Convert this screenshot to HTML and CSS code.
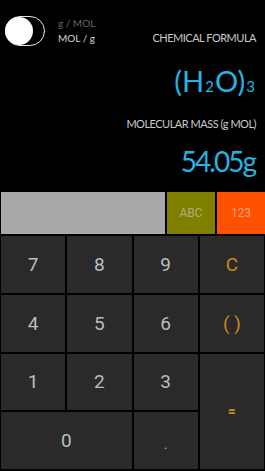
FILE: index.html
```html
<!DOCTYPE html>
<html>
<head>
<meta charset="utf-8">
<title>Molecular Mass</title>
<link rel="stylesheet" href="styles.css">
</head>
<body>
<div class="app">
	<div class="top">
		<div class="bar">
			<div class="switch"><span class="knob"></span></div>
			<div class="units">
				<div class="unit_off">g / MOL</div>
				<div class="unit_on">MOL / g</div>
			</div>
			<div class="label chem">CHEMICAL FORMULA</div>
		</div>
		<div class="formula">(H<sub>2</sub>O)<sub>3</sub></div>
		<div class="label mass">MOLECULAR MASS (g MOL)</div>
		<div class="result">54.05g</div>
	</div>

	<div class="display">
		<div class="input"></div>
		<div class="mode abc">ABC</div>
		<div class="mode num">123</div>
	</div>

	<div class="keys">
		<div class="key">7</div>
		<div class="key">8</div>
		<div class="key">9</div>
		<div class="key op">C</div>
		<div class="key">4</div>
		<div class="key">5</div>
		<div class="key">6</div>
		<div class="key op">( )</div>
		<div class="key">1</div>
		<div class="key">2</div>
		<div class="key">3</div>
		<div class="key op eq">=</div>
		<div class="key zero">0</div>
		<div class="key dot">.</div>
	</div>
</div>
</body>
</html>
```

FILE: styles.css
```css
*{margin:0;padding:0;box-sizing:border-box;}
html,body{background:#000;}
body{width:265px;height:471px;overflow:hidden;font-family:Lato,"Noto Sans",sans-serif;}
.app{display:flex;flex-direction:column;height:471px;}

.top{height:192px;display:flex;flex-direction:column;align-items:stretch;padding:0 9px 0 5px;}
.bar{display:flex;align-items:center;margin-top:16px;height:30px;}
.switch{width:40px;height:30px;border:1.5px solid #e6e6e6;border-radius:15px;display:flex;align-items:center;}
.knob{width:28px;height:28px;border-radius:50%;background:#fff;margin-left:-1px;}
.units{margin-left:13px;font-size:10px;line-height:15px;}
.unit_off{color:#666;}
.unit_on{color:#d6d6d6;}
.label{color:#c8c8c8;font-size:11px;text-align:right;letter-spacing:-0.5px;}
.chem{margin-left:auto;align-self:flex-end;line-height:14px;margin-bottom:1px;}

.formula{color:#27b3e2;font-size:29px;line-height:36px;text-align:right;margin-top:17px;}
.formula sub{font-size:15px;vertical-align:baseline;margin:0 1px;}
.mass{margin-top:13px;line-height:14px;}
.result{color:#27b3e2;font-size:28px;line-height:34px;text-align:right;margin-top:13px;letter-spacing:-2px;padding-right:1px;}

.display{display:grid;grid-template-columns:164px 48px 48px;gap:2px;height:42px;padding-left:1px;}
.input{background:#a9a9a9;}
.mode{display:flex;align-items:center;justify-content:center;font-family:Roboto,"Liberation Sans",sans-serif;font-size:12px;}
.abc{background:#7f7f00;color:#b2b07c;}
.num{background:#ff5100;color:#ffa27c;}

.keys{display:grid;grid-template-columns:repeat(4,1fr);grid-template-rows:repeat(4,1fr);gap:2px;height:233px;margin-top:2px;padding:0 1px;}
.key{background:#2a2a2a;color:#bcbcbc;display:flex;align-items:center;justify-content:center;font-family:Roboto,"Liberation Sans",sans-serif;font-size:19px;}
.op{color:#c9891f;}
.eq{grid-column:4;grid-row:3 / span 2;font-size:14px;font-weight:bold;}
.zero{grid-column:1 / span 2;}
.dot{font-size:12px;padding-top:8px;}
```
